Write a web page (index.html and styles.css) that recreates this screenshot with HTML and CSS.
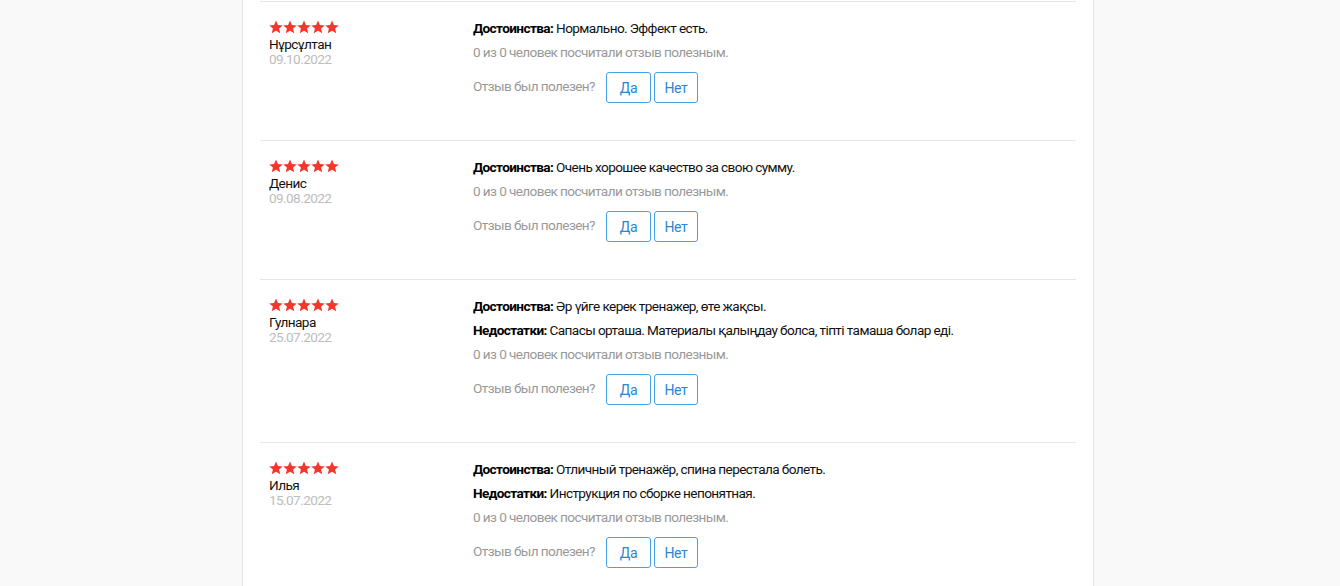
FILE: index.html
```html
<!DOCTYPE html>
<html lang="ru">
<head>
<meta charset="utf-8">
<title>Отзывы</title>
<link rel="stylesheet" href="styles.css">
</head>
<body>
<svg width="0" height="0" class="defs">
  <defs>
    <symbol id="star" viewBox="0 0 24 24">
      <path d="M12 1l3.3 7.6 8.3.7-6.3 5.4 2 8.1L12 18.5l-7.3 4.3 2-8.1L.4 9.3l8.3-.7z"/>
    </symbol>
  </defs>
</svg>
<div class="page">
  <div class="review">
    <div class="meta">
      <div class="stars"><svg><use href="#star"/></svg><svg><use href="#star"/></svg><svg><use href="#star"/></svg><svg><use href="#star"/></svg><svg><use href="#star"/></svg></div>
      <div class="name">Нұрсұлтан</div>
      <div class="date">09.10.2022</div>
    </div>
    <div class="body">
      <p class="line"><b>Достоинства:</b> Нормально. Эффект есть.</p>
      <p class="useful">0 из 0 человек посчитали отзыв полезным.</p>
      <div class="vote"><span class="q">Отзыв был полезен?</span><button class="btn btn-yes">Да</button><button class="btn">Нет</button></div>
    </div>
  </div>
  <div class="review">
    <div class="meta">
      <div class="stars"><svg><use href="#star"/></svg><svg><use href="#star"/></svg><svg><use href="#star"/></svg><svg><use href="#star"/></svg><svg><use href="#star"/></svg></div>
      <div class="name">Денис</div>
      <div class="date">09.08.2022</div>
    </div>
    <div class="body">
      <p class="line"><b>Достоинства:</b> Очень хорошее качество за свою сумму.</p>
      <p class="useful">0 из 0 человек посчитали отзыв полезным.</p>
      <div class="vote"><span class="q">Отзыв был полезен?</span><button class="btn btn-yes">Да</button><button class="btn">Нет</button></div>
    </div>
  </div>
  <div class="review">
    <div class="meta">
      <div class="stars"><svg><use href="#star"/></svg><svg><use href="#star"/></svg><svg><use href="#star"/></svg><svg><use href="#star"/></svg><svg><use href="#star"/></svg></div>
      <div class="name">Гулнара</div>
      <div class="date">25.07.2022</div>
    </div>
    <div class="body">
      <p class="line"><b>Достоинства:</b> Әр үйге керек тренажер, өте жақсы.</p>
      <p class="line"><b>Недостатки:</b> Сапасы орташа. Материалы қалыңдау болса, тіпті тамаша болар еді.</p>
      <p class="useful">0 из 0 человек посчитали отзыв полезным.</p>
      <div class="vote"><span class="q">Отзыв был полезен?</span><button class="btn btn-yes">Да</button><button class="btn">Нет</button></div>
    </div>
  </div>
  <div class="review">
    <div class="meta">
      <div class="stars"><svg><use href="#star"/></svg><svg><use href="#star"/></svg><svg><use href="#star"/></svg><svg><use href="#star"/></svg><svg><use href="#star"/></svg></div>
      <div class="name">Илья</div>
      <div class="date">15.07.2022</div>
    </div>
    <div class="body">
      <p class="line"><b>Достоинства:</b> Отличный тренажёр, спина перестала болеть.</p>
      <p class="line"><b>Недостатки:</b> Инструкция по сборке непонятная.</p>
      <p class="useful">0 из 0 человек посчитали отзыв полезным.</p>
      <div class="vote"><span class="q">Отзыв был полезен?</span><button class="btn btn-yes">Да</button><button class="btn">Нет</button></div>
    </div>
  </div>
</div>
</body>
</html>
```
FILE: styles.css
```css
html, body {
  margin: 0;
  padding: 0;
  background: #f9f9f9;
  font-family: Roboto, "Liberation Sans", Arial, sans-serif;
  font-size: 13.6px;
  letter-spacing: -0.6px;
  color: #111;
}
.defs {
  position: absolute;
  width: 0;
  height: 0;
}
.page {
  width: 816px;
  margin-left: 242px;
  padding: 1px 17px 0;
  background: #fff;
  border-left: 1px solid #e6e6e6;
  border-right: 1px solid #e6e6e6;
  min-height: 585px;
}
.review {
  display: flex;
  border-top: 1px solid #e6e6e6;
  padding: 14px 9px 37px;
}
.meta {
  width: 204px;
  flex: none;
}
.stars {
  display: flex;
  height: 14px;
  margin-top: 4px;
}
.stars svg {
  width: 14px;
  height: 14px;
  fill: #f2382c;
}
.name {
  line-height: 15px;
  color: #111;
  margin-top: 3px;
}
.date {
  line-height: 15px;
  color: #bdbdbd;
}
.body {
  flex: 1;
}
.line, .useful {
  margin: 0;
  line-height: 24px;
  height: 24px;
}
.line {
  color: #111;
}
.line b {
  font-weight: 700;
  color: #000;
}
.useful {
  color: #999;
}
.vote {
  display: flex;
  align-items: center;
  margin-top: 8px;
}
.q {
  color: #999;
  margin-right: 11px;
  margin-top: -3px;
}
.btn {
  font-family: inherit;
  font-size: 14px;
  letter-spacing: -0.4px;
  color: #2a86d3;
  background: #fff;
  border: 1px solid #46a2e6;
  border-radius: 3px;
  height: 31px;
  width: 44px;
  padding: 0;
  margin-right: 3px;
  cursor: pointer;
}
.btn-yes {
  width: 45px;
}
```
